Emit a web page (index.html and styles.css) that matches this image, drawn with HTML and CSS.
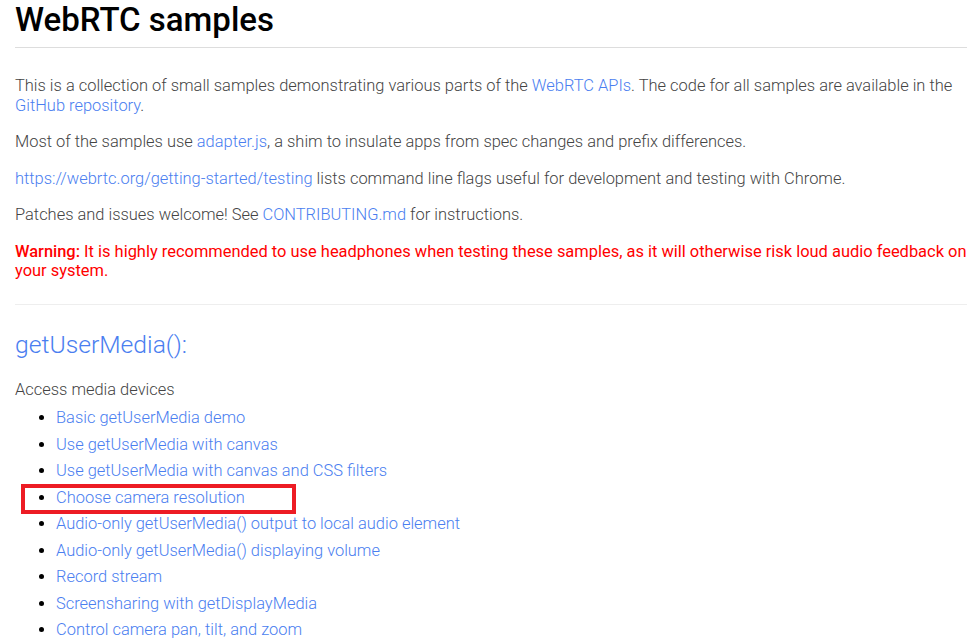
FILE: index.html
```html
<!DOCTYPE html>
<html>
<head>
<meta charset="utf-8">
<title>WebRTC samples</title>
<link rel="stylesheet" href="styles.css">
</head>
<body>
<div class="container">
  <h1>WebRTC samples</h1>
  <section class="intro">
    <p>This is a collection of small samples demonstrating various parts of the <a href="#">WebRTC APIs</a>. The code for all samples are available in the <a href="#">GitHub repository</a>.</p>
    <p>Most of the samples use <a href="#">adapter.js</a>, a shim to insulate apps from spec changes and prefix differences.</p>
    <p><a href="#">https://webrtc.org/getting-started/testing</a> lists command line flags useful for development and testing with Chrome.</p>
    <p>Patches and issues welcome! See <a href="#">CONTRIBUTING.md</a> for instructions.</p>
    <p class="warning"><strong>Warning:</strong> It is highly recommended to use headphones when testing these samples, as it will otherwise risk loud audio feedback on your system.</p>
  </section>
  <h2><a href="#">getUserMedia():</a></h2>
  <p class="desc">Access media devices</p>
  <ul class="samples">
    <li><a href="#">Basic getUserMedia demo</a></li>
    <li><a href="#">Use getUserMedia with canvas</a></li>
    <li><a href="#">Use getUserMedia with canvas and CSS filters</a></li>
    <li class="marked"><a href="#">Choose camera resolution</a><span class="highlight"></span></li>
    <li><a href="#">Audio-only getUserMedia() output to local audio element</a></li>
    <li><a href="#">Audio-only getUserMedia() displaying volume</a></li>
    <li><a href="#">Record stream</a></li>
    <li><a href="#">Screensharing with getDisplayMedia</a></li>
    <li><a href="#">Control camera pan, tilt, and zoom</a></li>
  </ul>
</div>
</body>
</html>
```

FILE: styles.css
```css
html, body {
  margin: 0;
  padding: 0;
  background: #fff;
}
body {
  font-family: Roboto, "Liberation Sans", sans-serif;
  font-weight: 300;
  font-size: 16.45px;
  color: #444;
  overflow: hidden;
}
.container {
  padding: 0 0 0 15px;
}
h1 {
  margin: 0;
  padding: 2px 0 9px 0;
  font-size: 33px;
  line-height: 36px;
  font-weight: 500;
  color: #000;
  border-bottom: 1px solid #ddd;
}
a {
  color: #4a7ef0;
  text-decoration: none;
  font-weight: 300;
}
.intro {
  padding: 28px 0 23px 0;
  border-bottom: 1px solid #eee;
}
p {
  margin: 0 0 17px 0;
  line-height: 19.5px;
  color: #444;
}
.intro p:last-child {
  margin-bottom: 0;
}
.warning {
  color: #f00;
  font-weight: 400;
}
.warning strong {
  font-weight: 500;
}
h2 {
  margin: 25px 0 0 0;
  font-size: 24.7px;
  line-height: 30px;
  font-weight: 300;
}
h2 a {
  color: #4a7ef0;
}
.desc {
  margin: 20px 0 0 0;
}
.samples {
  margin: 6px 0 0 0;
  padding: 0 0 0 41px;
  list-style: disc;
  color: #000;
}
.samples li {
  line-height: 26.5px;
}
.samples li::marker {
  color: #000;
}
.marked {
  position: relative;
}
.highlight {
  position: absolute;
  left: -35px;
  top: -1px;
  width: 267px;
  height: 22px;
  border: 4px solid #ed1c24;
  pointer-events: none;
}
```
